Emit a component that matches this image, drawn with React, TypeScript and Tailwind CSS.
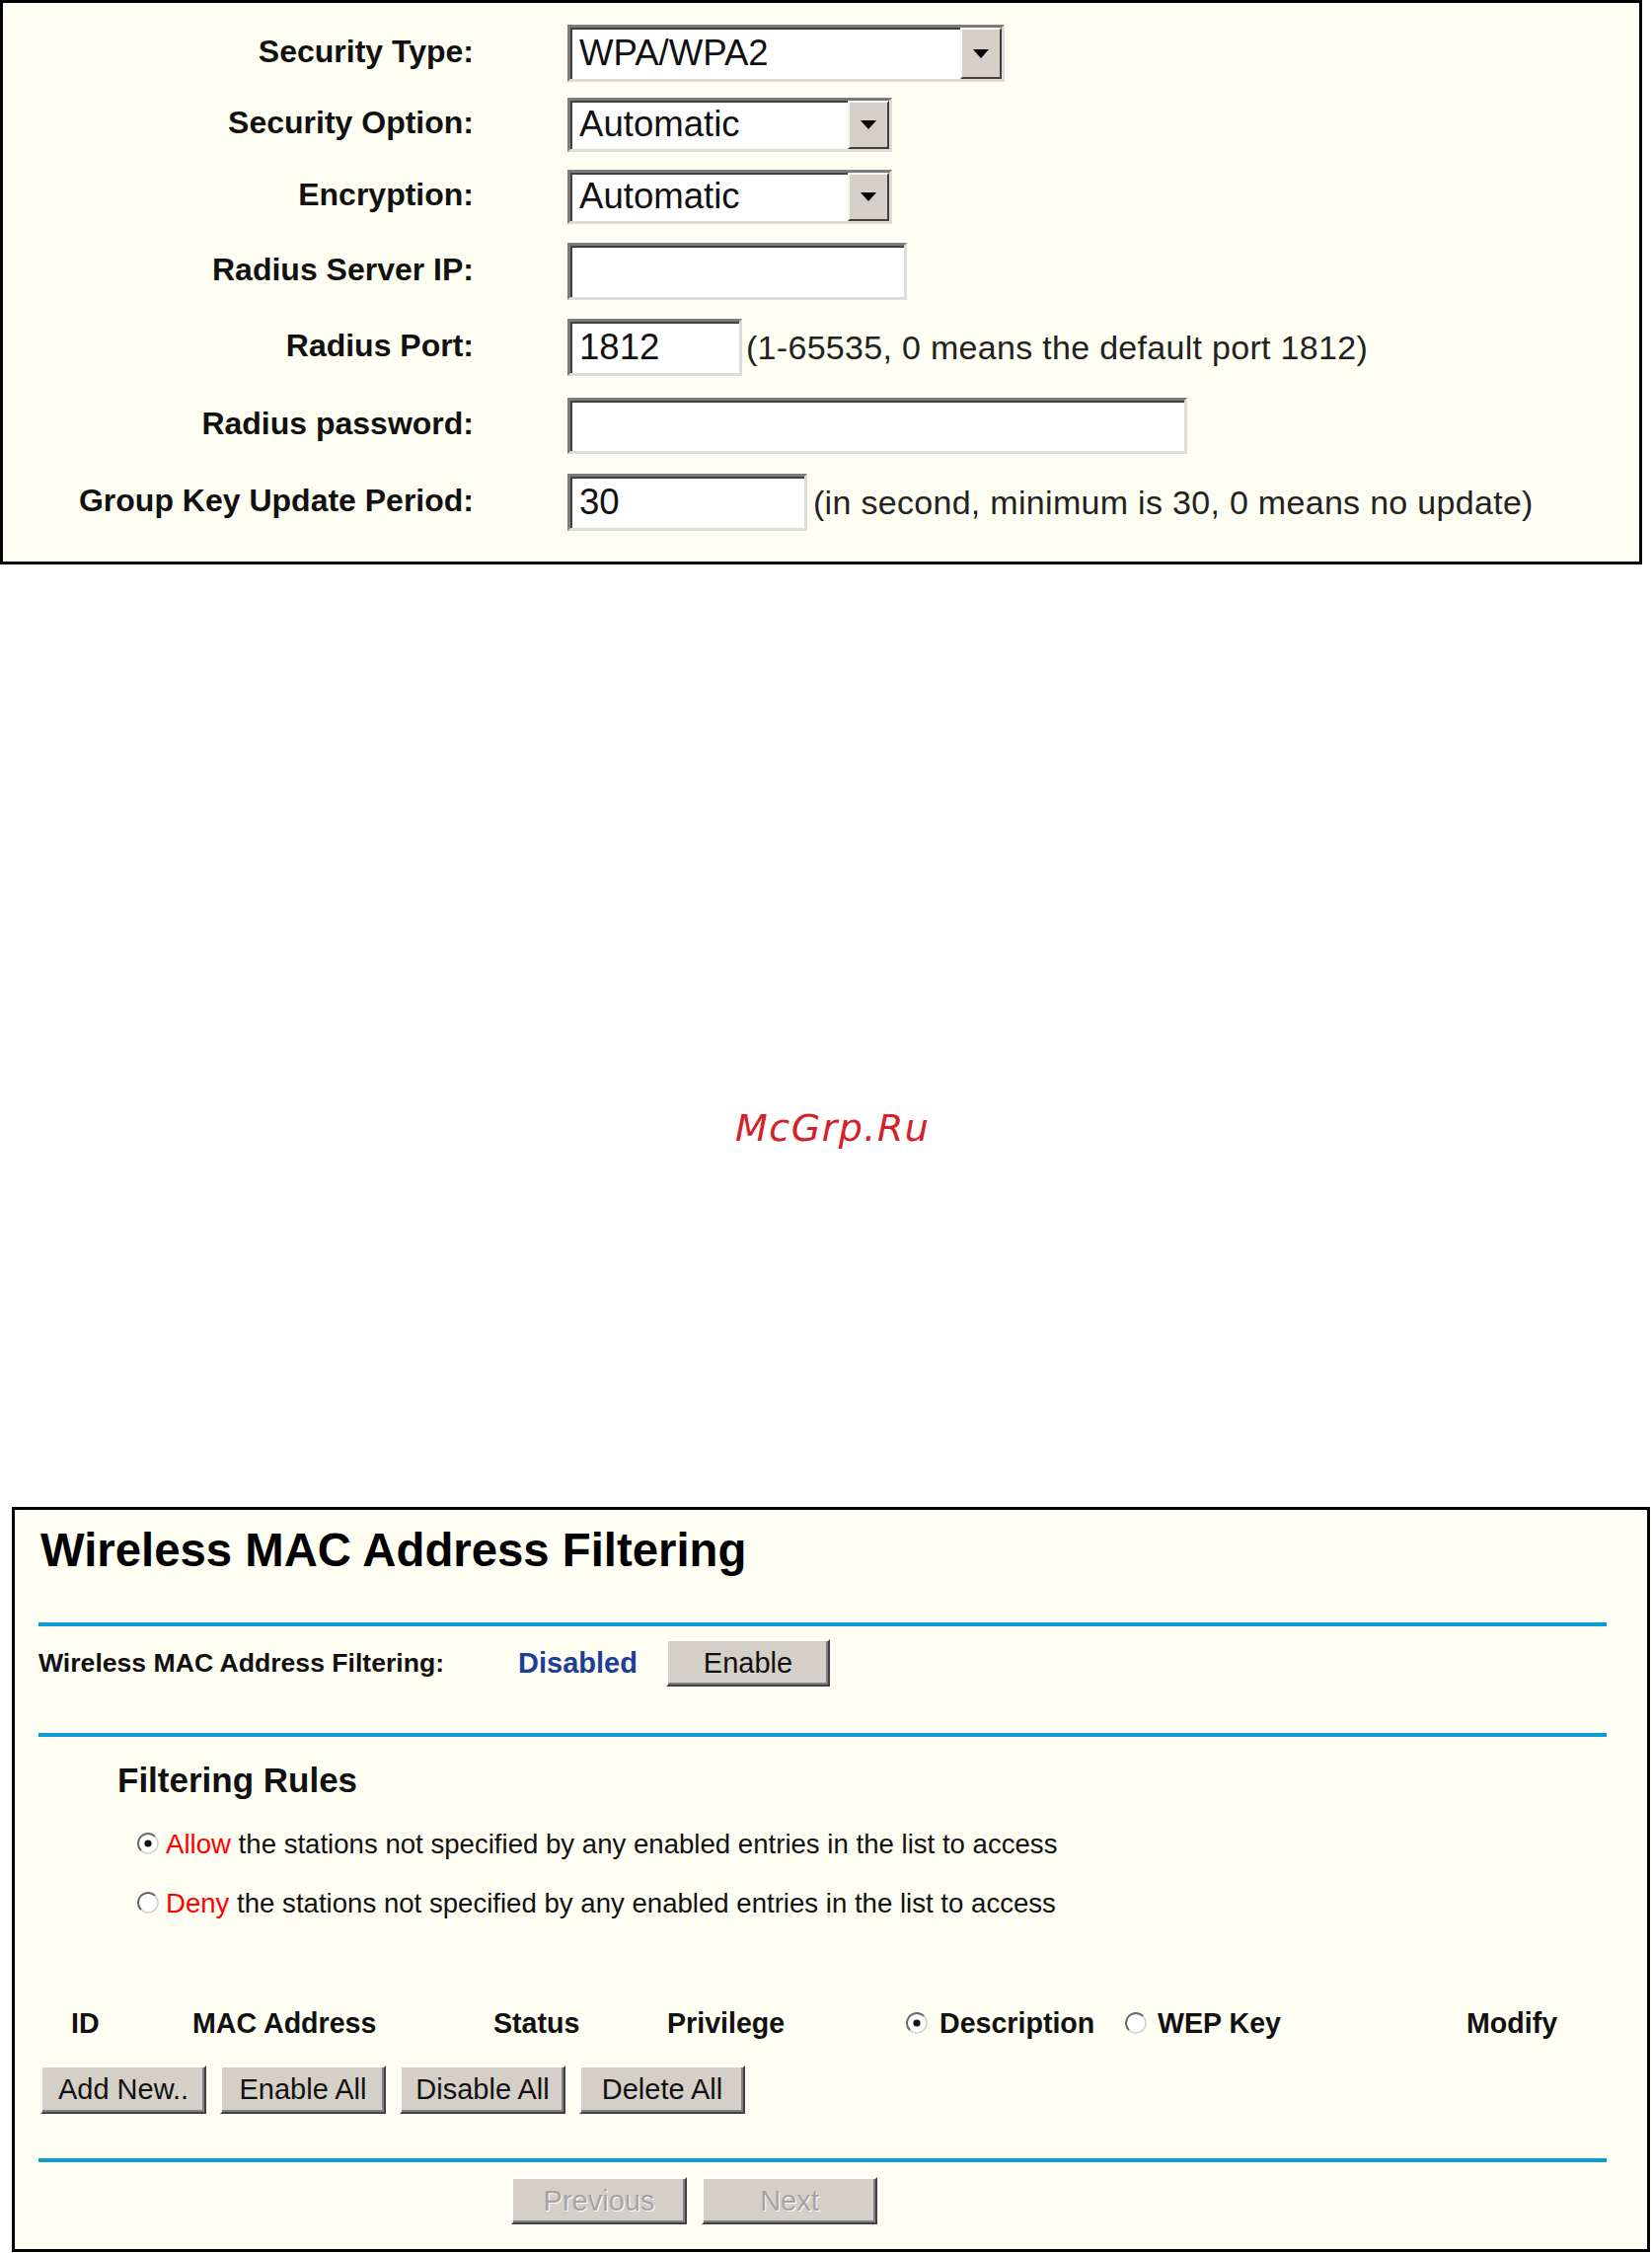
import { type ReactNode } from "react";
import { clsx as cn } from "clsx";

const sunken =
  "border-[3px] border-t-[#7b7b7b] border-l-[#7b7b7b] border-r-[#dedcd6] border-b-[#dedcd6] shadow-[inset_2px_2px_0_#404040] bg-white";

function Arrow() {
  return (
    <div className="h-full w-[42px] shrink-0 bg-[#d4d0c8] border-2 border-t-[#f6f6f6] border-l-[#f6f6f6] border-r-[#404040] border-b-[#404040] flex items-center justify-center">
      <svg width="18" height="11" viewBox="0 0 18 11">
        <path d="M1 1h16L9 10z" fill="#000" />
      </svg>
    </div>
  );
}

function FakeSelect({ value, className }: { value: string; className: string }) {
  return (
    <div className={cn(sunken, "flex items-stretch", className)}>
      <span className="flex-1 pl-[9px] flex items-center text-[36.6px] leading-none text-[#111]">
        {value}
      </span>
      <Arrow />
    </div>
  );
}

function TextBox({
  value,
  className,
  type = "text",
}: {
  value?: string;
  className: string;
  type?: string;
}) {
  return (
    <input
      type={type}
      defaultValue={value}
      className={cn(
        sunken,
        "pl-[9px] text-[36.6px] leading-none text-[#111] outline-none",
        className,
      )}
    />
  );
}

function Row({
  label,
  className,
  children,
}: {
  label: string;
  className: string;
  children: ReactNode;
}) {
  return (
    <div className={cn("flex items-center", className)}>
      <div className="w-[477px] pb-[5px] text-right text-[32px] font-bold leading-none text-[#111]">
        {label}
      </div>
      <div className="ml-[95px] flex h-full items-center">{children}</div>
    </div>
  );
}

function Hint({ children, className }: { children: ReactNode; className: string }) {
  return (
    <span className={cn("text-[34px] leading-none tracking-[0.3px] text-[#222]", className)}>
      {children}
    </span>
  );
}

function Radio({ checked }: { checked?: boolean }) {
  return (
    <svg width="22" height="22" viewBox="0 0 22 22" className="shrink-0">
      <circle cx="11" cy="11" r="10" fill="#fff" stroke="#d0d0d0" strokeWidth="1.5" />
      <path d="M3.9 18.1A10 10 0 0 1 18.1 3.9" fill="none" stroke="#6a6a6a" strokeWidth="2" />
      {checked && <circle cx="11" cy="11" r="3.6" fill="#111" />}
    </svg>
  );
}

function Btn({
  children,
  className,
  disabled,
}: {
  children: ReactNode;
  className: string;
  disabled?: boolean;
}) {
  return (
    <button
      type="button"
      disabled={disabled}
      className={cn(
        "h-[48px] bg-[#d4d0c8] border-2 border-t-white border-l-white border-r-[#404040] border-b-[#404040] shadow-[inset_-2px_-2px_0_#808080] text-[29px] leading-none",
        disabled ? "text-[#a4a4a4] [text-shadow:1px_1px_0_#fff]" : "text-[#111]",
        className,
      )}
    >
      {children}
    </button>
  );
}

function SecurityPanel() {
  return (
    <div className="w-[1664px] h-[572px] border-[3px] border-black bg-[#fefef3]">
      <Row label="Security Type:" className="mt-[22px] h-[58px]">
        <FakeSelect value="WPA/WPA2" className="w-[443px] h-[58px]" />
      </Row>
      <Row label="Security Option:" className="mt-[16px] h-[55px]">
        <FakeSelect value="Automatic" className="w-[329px] h-[55px]" />
      </Row>
      <Row label="Encryption:" className="mt-[18px] h-[55px]">
        <FakeSelect value="Automatic" className="w-[329px] h-[55px]" />
      </Row>
      <Row label="Radius Server IP:" className="mt-[19px] h-[58px]">
        <TextBox className="w-[344px] h-[58px]" />
      </Row>
      <Row label="Radius Port:" className="mt-[19px] h-[58px]">
        <TextBox value="1812" className="w-[177px] h-[58px]" />
        <Hint className="ml-[4px]">(1-65535, 0 means the default port 1812)</Hint>
      </Row>
      <Row label="Radius password:" className="mt-[22px] h-[57px]">
        <TextBox type="password" className="w-[628px] h-[57px]" />
      </Row>
      <Row label="Group Key Update Period:" className="mt-[20px] h-[58px]">
        <TextBox value="30" className="w-[243px] h-[58px]" />
        <Hint className="ml-[6px]">(in second, minimum is 30, 0 means no update)</Hint>
      </Row>
    </div>
  );
}

function BlueLine({ className }: { className: string }) {
  return <div className={cn("h-[4px] w-[1589px] bg-[#0c9bd2]", className)} />;
}

function MacFilterPanel() {
  return (
    <div className="ml-[12px] w-[1660px] h-[755px] border-[3px] border-black bg-[#fefef3] pl-[24px] text-[#111]">
      <h1 className="mt-[17px] ml-[2px] text-[47.3px] font-bold leading-none text-black">
        Wireless MAC Address Filtering
      </h1>

      <BlueLine className="mt-[50px]" />

      <div className="mt-[13px] flex h-[48px] items-center">
        <span className="w-[486px] text-[26.6px] font-bold leading-none">
          Wireless MAC Address Filtering:
        </span>
        <span className="w-[150px] text-[29px] font-bold leading-none text-[#1d3d97]">
          Disabled
        </span>
        <Btn className="w-[166px]">Enable</Btn>
      </div>

      <BlueLine className="mt-[47px]" />

      <h2 className="mt-[26px] ml-[80px] text-[35px] font-bold leading-none">Filtering Rules</h2>

      <div className="ml-[100px] mt-[27px] flex h-[40px] items-center gap-[7px] text-[27.6px] leading-none">
        <Radio checked />
        <span>
          <span className="text-[#f00]">Allow</span> the stations not specified by any enabled
          entries in the list to access
        </span>
      </div>
      <div className="ml-[100px] mt-[20px] flex h-[40px] items-center gap-[7px] text-[27.6px] leading-none">
        <Radio />
        <span>
          <span className="text-[#f00]">Deny</span> the stations not specified by any enabled
          entries in the list to access
        </span>
      </div>

      <div className="mt-[82px] flex h-[40px] items-center text-[28.6px] font-bold leading-none">
        <span className="ml-[33px] w-[123px]">ID</span>
        <span className="w-[305px]">MAC Address</span>
        <span className="w-[176px]">Status</span>
        <span className="w-[242px]">Privilege</span>
        <span className="flex w-[222px] items-center gap-[12px]">
          <Radio checked />
          Description
        </span>
        <span className="flex w-[346px] items-center gap-[11px]">
          <Radio />
          WEP Key
        </span>
        <span>Modify</span>
      </div>

      <div className="mt-[23px] ml-[2px] flex gap-[14px]">
        <Btn className="w-[168px] h-[49px]">Add New..</Btn>
        <Btn className="w-[168px] h-[49px]">Enable All</Btn>
        <Btn className="w-[168px] h-[49px]">Disable All</Btn>
        <Btn className="w-[168px] h-[49px]">Delete All</Btn>
      </div>

      <BlueLine className="mt-[45px]" />

      <div className="mt-[15px] ml-[479px] flex gap-[15px]">
        <Btn disabled className="w-[178px]">
          Previous
        </Btn>
        <Btn disabled className="w-[178px]">
          Next
        </Btn>
      </div>
    </div>
  );
}

export default function App() {
  return (
    <div className="min-h-screen w-[1674px] bg-white font-['Liberation_Sans',Arial,sans-serif]">
      <SecurityPanel />
      <div className="h-[955px] pl-[745px] pt-[552px]">
        <span className="font-['DejaVu_Sans',sans-serif] text-[38px] italic leading-none tracking-[1.5px] text-[#d42027]">
          McGrp.Ru
        </span>
      </div>
      <MacFilterPanel />
    </div>
  );
}
